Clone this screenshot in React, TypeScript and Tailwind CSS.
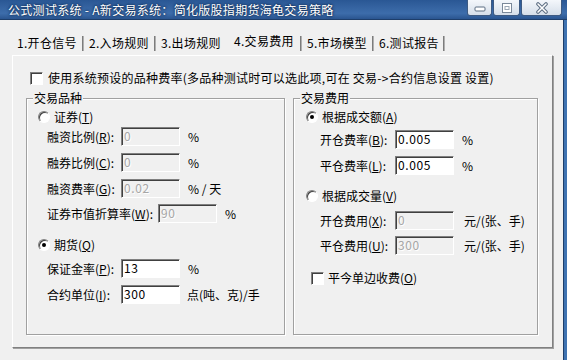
import React from 'react';

const sunken =
  'border border-t-[#808080] border-l-[#808080] border-r-white border-b-white shadow-[inset_1px_1px_0_#404040]';

function Key({ k }: { k: string }) {
  return (
    <>
      (<span className="underline underline-offset-[1px]">{k}</span>)
    </>
  );
}

function Radio({ checked }: { checked?: boolean }) {
  return (
    <span className={`w-[12px] h-[12px] rounded-full bg-white flex items-center justify-center shrink-0 ${sunken}`}>
      {checked && <span className="w-[4px] h-[4px] rounded-full bg-black" />}
    </span>
  );
}

function Check() {
  return <span className={`w-[13px] h-[13px] bg-white shrink-0 ${sunken}`} />;
}

function Field({ value, disabled, w = 'w-[59px]' }: { value: string; disabled?: boolean; w?: string }) {
  return (
    <div
      className={`h-[19px] ${w} ${sunken} pl-[2px] leading-[16px] tracking-[0.6px] ${
        disabled ? 'bg-[#f0f0f0] text-[#a6a6a6] [text-shadow:1px_1px_0_#fff]' : 'bg-white text-black'
      }`}
    >
      {value}
    </div>
  );
}

function Row({
  label,
  k,
  value,
  unit,
  disabled,
  labelW,
  mt,
  ml,
  unitMl = 'ml-[8px]',
}: {
  label: string;
  k: string;
  value: string;
  unit: string;
  disabled?: boolean;
  labelW: string;
  mt: string;
  ml: string;
  unitMl?: string;
}) {
  return (
    <div className={`flex items-center h-[19px] ${mt} ${ml}`}>
      <span className={`${labelW} whitespace-nowrap`}>
        {label}
        <Key k={k} />:
      </span>
      <Field value={value} disabled={disabled} />
      <span className={`${unitMl} whitespace-nowrap`}>{unit}</span>
    </div>
  );
}

function Group({ title, className, children }: { title: string; className: string; children: React.ReactNode }) {
  return (
    <div className={`relative h-[237px] border border-[#a0a0a0] shadow-[inset_1px_1px_0_#fff,1px_1px_0_#fff] ${className}`}>
      <span className="absolute left-[6px] -top-[9px] px-[1px] bg-[#f0f0f0] leading-[16px]">{title}</span>
      {children}
    </div>
  );
}

const TABS = [
  { t: '1.开仓信号', w: 'w-[65px]', sep: true },
  { t: '2.入场规则', w: 'w-[65px]', sep: true },
  { t: '3.出场规则', w: 'w-[73px]', sep: false },
  { t: '4.交易费用', w: 'w-[66px]', sep: true, active: true },
  { t: '5.市场模型', w: 'w-[65px]', sep: true },
  { t: '6.测试报告', w: 'w-[64px]', sep: true },
];

function TitleButtons() {
  const btn =
    'h-[16px] border border-t-0 border-[#3d5a82] rounded-b-[3px] bg-[linear-gradient(to_bottom,#f4f7fb,#d5dee9)] flex items-center justify-center';
  return (
    <div className="flex gap-[1px] mr-[5px]">
      <div className={`${btn} w-[25px]`}>
        <svg width="12" height="8" viewBox="0 0 12 8">
          <rect x="1" y="3" width="10" height="4" rx="1" fill="#fff" stroke="#5d6e83" />
        </svg>
      </div>
      <div className={`${btn} w-[27px]`}>
        <svg width="12" height="12" viewBox="0 0 12 12">
          <rect x="1.5" y="1.5" width="9" height="9" fill="#fff" stroke="#7a8899" />
          <rect x="4" y="4.5" width="4" height="3" fill="none" stroke="#9aa6b4" />
        </svg>
      </div>
      <div className={`${btn} w-[41px]`}>
        <svg width="14" height="12" viewBox="0 0 14 12">
          <path d="M3 2 L11 10 M11 2 L3 10" stroke="#5d6e83" strokeWidth="3.6" strokeLinecap="round" />
          <path d="M3 2 L11 10 M11 2 L3 10" stroke="#fff" strokeWidth="1.6" strokeLinecap="round" />
        </svg>
      </div>
    </div>
  );
}

export default function App() {
  return (
    <div className="w-[567px] h-[360px] overflow-hidden flex flex-col bg-[#f0f0f0] text-[12px] text-black font-['Noto_Sans_CJK_SC','Noto_Sans',sans-serif]">
      {/* title bar */}
      <div className="h-[20px] shrink-0 flex items-start justify-between bg-[linear-gradient(to_bottom,#2a5794,#3d6dab_70%,#2a5590)] border-b border-[#1e3e6a]">
        <span className="ml-[8px] mt-[2px] leading-[15px] text-white whitespace-nowrap tracking-[0.3px] [text-shadow:0_0_2px_#0c2850,0_0_3px_#0c2850]">
          公式测试系统 -&nbsp;A新交易系统：简化版股指期货海龟交易策略
        </span>
        <TitleButtons />
      </div>

      <div className="flex-1 flex">
        <div className="flex-1 flex flex-col">
          {/* tabs */}
          <div className="h-[35px] flex items-start pl-[17px] pt-[13px]">
            {TABS.map((tab) => (
              <React.Fragment key={tab.t}>
                <span
                  className={`${tab.w} whitespace-nowrap leading-[16px] tracking-[0.3px] ${tab.active ? 'pt-0' : 'pt-[2px]'}`}
                >
                  {tab.t}
                </span>
                {tab.sep && <span className="w-[2px] h-[15px] mt-[3px] mr-[5px] bg-[#7c7c7c] border-r border-[#b0b0b0]" />}
              </React.Fragment>
            ))}
          </div>

          {/* tab page */}
          <div className="ml-[12px] w-[541px] h-[293px] border border-t-white border-l-white border-r-[#808080] border-b-[#808080] shadow-[1px_1px_0_#a0a0a0] pt-[14px]">
            <div className="flex items-center h-[16px] ml-[17px] gap-[5px] whitespace-nowrap">
              <Check />
              <span className="tracking-[0.25px]">
                使用系统预设的品种费率(多品种测试时可以选此项,可在 交易-&gt;合约信息设置 设置)
              </span>
            </div>

            <div className="flex mt-[12px] ml-[13px] gap-[8px]">
              <Group title="交易品种" className="w-[259px]">
                <div className="flex items-center h-[16px] mt-[10px] ml-[11px] gap-[4px]">
                  <Radio />
                  <span>
                    证券
                    <Key k="T" />
                  </span>
                </div>
                <Row label="融资比例" k="R" value="0" unit="%" disabled labelW="w-[74px]" mt="mt-[2px]" ml="ml-[20px]" />
                <Row label="融券比例" k="C" value="0" unit="%" disabled labelW="w-[74px]" mt="mt-[7px]" ml="ml-[20px]" />
                <Row label="融资费率" k="G" value="0.02" unit="% / 天" disabled labelW="w-[74px]" mt="mt-[7px]" ml="ml-[20px]" />
                <Row label="证券市值折算率" k="W" value="90" unit="%" disabled labelW="w-[111px]" mt="mt-[6px]" ml="ml-[20px]" />
                <div className="flex items-center h-[16px] mt-[14px] ml-[11px] gap-[4px]">
                  <Radio checked />
                  <span>
                    期货
                    <Key k="Q" />
                  </span>
                </div>
                <Row label="保证金率" k="P" value="13" unit="%" labelW="w-[74px]" mt="mt-[6px]" ml="ml-[20px]" />
                <Row label="合约单位" k="I" value="300" unit="点(吨、克)/手" labelW="w-[74px]" mt="mt-[7px]" ml="ml-[20px]" unitMl="ml-[7px]" />
              </Group>

              <Group title="交易费用" className="w-[245px]">
                <div className="flex items-center h-[16px] mt-[10px] ml-[12px] gap-[4px]">
                  <Radio checked />
                  <span>
                    根据成交额
                    <Key k="A" />
                  </span>
                </div>
                <Row label="开仓费率" k="B" value="0.005" unit="%" labelW="w-[75px]" mt="mt-[5px]" ml="ml-[26px]" />
                <Row label="平仓费率" k="L" value="0.005" unit="%" labelW="w-[75px]" mt="mt-[7px]" ml="ml-[26px]" />
                <div className="flex items-center h-[16px] mt-[13px] ml-[12px] gap-[4px]">
                  <Radio />
                  <span>
                    根据成交量
                    <Key k="V" />
                  </span>
                </div>
                <Row label="开仓费用" k="X" value="0" unit="元/(张、手)" disabled labelW="w-[75px]" mt="mt-[7px]" ml="ml-[26px]" unitMl="ml-[10px]" />
                <Row label="平仓费用" k="U" value="300" unit="元/(张、手)" disabled labelW="w-[75px]" mt="mt-[6px]" ml="ml-[26px]" unitMl="ml-[10px]" />
                <div className="flex items-center h-[16px] mt-[15px] ml-[17px] gap-[4px]">
                  <Check />
                  <span>
                    平今单边收费
                    <Key k="O" />
                  </span>
                </div>
              </Group>
            </div>
          </div>
        </div>

        {/* window right frame */}
        <div className="w-[4px] shrink-0 bg-[#3f73b1] border-l border-[#1d3d69]" />
      </div>
    </div>
  );
}
